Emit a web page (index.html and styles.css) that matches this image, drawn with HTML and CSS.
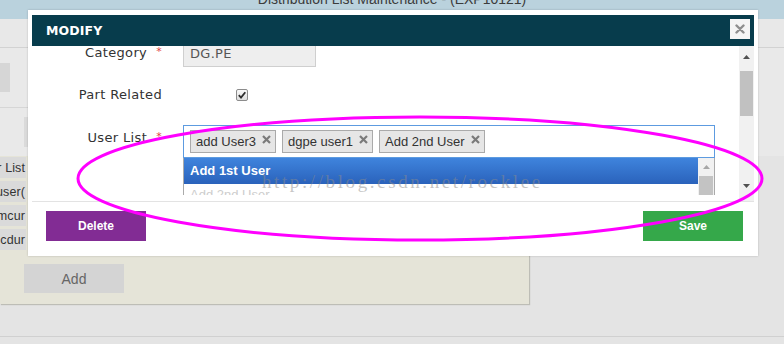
FILE: index.html
```html
<!DOCTYPE html>
<html lang="en">
<head>
<meta charset="utf-8">
<title>Distribution List Maintenance</title>
<link rel="stylesheet" href="styles.css">
</head>
<body>
<div class="page">
  <header class="topbar"><h1 class="app-title">Distribution List Maintenance - (EXP10121)</h1></header>
  <div class="toolbar"></div>
  <div class="upper">
    <div class="tool-block"></div>
    <div class="upper-sep"></div>
    <div class="filter-box"></div>
  </div>
  <section class="panel">
    <div class="grid">
      <div class="cell"><span>User List</span></div>
      <div class="cell"><span>Add user(</span></div>
      <div class="cell"><span>dgpe mcur</span></div>
      <div class="cell"><span>dgpe cdur</span></div>
    </div>
    <button class="btn-add">Add</button>
  </section>
  <div class="bottom-space"></div>
  <div class="footer-line"></div>
</div>

<div class="modal">
  <div class="modal-header">
    <span class="modal-title">MODIFY</span>
    <button class="close"><svg width="10" height="10" viewBox="0 0 10 10"><path d="M1.5 1.5L8.5 8.5M8.5 1.5L1.5 8.5" stroke="#8f8f8f" stroke-width="2.4" stroke-linecap="round"/></svg></button>
  </div>
  <div class="modal-body">
    <div class="form">
      <div class="row row-category">
        <label class="lbl">Category<span class="req">*</span></label>
        <div class="input">DG.PE</div>
      </div>
      <div class="row row-part">
        <label class="lbl">Part Related</label>
        <span class="checkbox"><svg width="12" height="12" viewBox="0 0 12 12"><defs><linearGradient id="cb" x1="0" y1="0" x2="0" y2="1"><stop offset="0" stop-color="#fafafa"/><stop offset="1" stop-color="#dcdcdc"/></linearGradient></defs><rect x="0.5" y="0.5" width="11" height="11" rx="1.5" fill="url(#cb)" stroke="#8c8c8c"/><path d="M2.8 6.2L5 8.6L9.3 3.2" fill="none" stroke="#2d2d2d" stroke-width="1.8"/></svg></span>
      </div>
      <div class="row row-users">
        <label class="lbl">User List<span class="req">*</span></label>
        <div class="multi">
          <div class="choices">
            <span class="tag">add User3<svg class="x" width="9" height="9" viewBox="0 0 9 9"><path d="M1 1L8 8M8 1L1 8" stroke="#7a7a7a" stroke-width="2.2"/></svg></span>
            <span class="tag">dgpe user1<svg class="x" width="9" height="9" viewBox="0 0 9 9"><path d="M1 1L8 8M8 1L1 8" stroke="#7a7a7a" stroke-width="2.2"/></svg></span>
            <span class="tag">Add 2nd User<svg class="x" width="9" height="9" viewBox="0 0 9 9"><path d="M1 1L8 8M8 1L1 8" stroke="#7a7a7a" stroke-width="2.2"/></svg></span>
          </div>
          <div class="drop">
            <ul class="drop-list">
              <li class="opt opt-hl">Add 1st User</li>
              <li class="opt opt-dis">Add 2nd User</li>
            </ul>
            <div class="drop-scroll">
              <span class="ds-up"><svg width="7" height="4" viewBox="0 0 7 4"><path d="M0 4L3.5 0L7 4Z" fill="#a6a6a6"/></svg></span>
              <span class="ds-thumb"></span>
            </div>
          </div>
        </div>
      </div>
    </div>
    <div class="vscroll">
      <span class="sb-up"><svg width="7" height="4" viewBox="0 0 7 4"><path d="M0 4L3.5 0L7 4Z" fill="#505050"/></svg></span>
      <span class="sb-thumb"></span>
      <span class="sb-fill"></span>
      <span class="sb-down"><svg width="7" height="4" viewBox="0 0 7 4"><path d="M0 0L3.5 4L7 0Z" fill="#505050"/></svg></span>
    </div>
  </div>
  <div class="modal-footer">
    <button class="btn btn-delete">Delete</button>
    <button class="btn btn-save">Save</button>
  </div>
</div>

<div class="watermark">http://blog.csdn.net/rocklee</div>
<svg class="annot" width="784" height="344" viewBox="0 0 784 344"><ellipse cx="420" cy="178.5" rx="342" ry="61.5" fill="none" stroke="#ff00ff" stroke-width="3"/></svg>
</body>
</html>
```

FILE: styles.css
```css
* { box-sizing: border-box; margin: 0; padding: 0; }
html, body { width: 784px; height: 344px; overflow: hidden; }
body {
  position: relative;
  background: #e4e4e4;
  font-family: "DejaVu Sans", Verdana, sans-serif;
  font-size: 13px;
  color: #333;
}

/* underlying page */
.page { display: flex; flex-direction: column; height: 344px; }
.topbar {
  height: 19px; flex: none;
  background: #bad2dd;
  display: flex; justify-content: center; align-items: flex-start;
  overflow: hidden;
}
.app-title {
  font: normal 14px/16px "Liberation Sans", Arial, sans-serif;
  color: #3c3c3c;
  margin-top: -9px;
  white-space: nowrap;
}
.toolbar { height: 29px; flex: none; background: #e8e8e8; border-bottom: 1px solid #d2d2d2; }
.upper { height: 108px; flex: none; background: #e9e9e9; padding-top: 15px; }
.tool-block { width: 10px; height: 29px; background: #d6d6d6; }
.upper-sep { margin-top: 15px; width: 28px; height: 1px; background: #d6d6d6; }
.filter-box { margin: 9px 0 0 24px; width: 6px; height: 30px; background: #dadada; }

.panel {
  width: 529px; height: 148px; flex: none;
  background: #e5e4d8;
  box-shadow: 1px 1px 1px #bdbdb6;
  padding-top: 1px;
  display: flex; flex-direction: column; align-items: flex-start;
}
.grid { display: flex; flex-direction: column; gap: 3px; width: 26px; }
.cell {
  height: 21px; background: #dadada;
  display: flex; justify-content: flex-end; align-items: center;
  overflow: hidden; white-space: nowrap;
  padding-right: 1px;
  font: 12.5px "Liberation Sans", Arial, sans-serif;
  letter-spacing: .1px;
  color: #333;
}
.btn-add {
  margin: 14px 0 0 24px;
  width: 100px; height: 29px;
  border: 0; background: #d4d4d4;
  font: 14px "Liberation Sans", Arial, sans-serif;
  color: #666;
}
.bottom-space { height: 32px; flex: none; }
.footer-line { height: 1px; flex: none; background: #d0d0d0; }

/* modal */
.modal {
  position: absolute; left: 28px; top: 10px;
  width: 730px; height: 246px;
  background: #fff;
  padding: 5px 4px 0 4px;
  display: flex; flex-direction: column;
  box-shadow: 0 0 2px rgba(0,0,0,.2);
}
.modal-header {
  height: 31px; flex: none;
  background: #073c4c;
  display: flex; align-items: center; justify-content: space-between;
  padding: 0 4px 0 14px;
}
.modal-title { font: bold 12.5px "DejaVu Sans", Verdana, sans-serif; color: #fff; letter-spacing: .1px; }
.close {
  width: 20px; height: 20px; margin-top: -3px;
  border: 0; background: #f5f5f5;
  display: flex; align-items: center; justify-content: center;
}

.modal-body { height: 155px; flex: none; display: flex; }
.form { flex: 1; overflow: hidden; }
.row { display: flex; }
.lbl {
  flex: none; width: 130px; margin-right: 21px;
  text-align: right; line-height: 20px;
  letter-spacing: .35px; color: #333;
}
.req { color: #e0453f; font-size: 11px; vertical-align: 2px; margin-left: 9px; }

.row-category { margin-top: -6px; height: 27px; align-items: flex-start; }
.row-category .lbl { padding-top: 2px; }
.input {
  width: 133px; height: 27px;
  border: 1px solid #cfcfcf; background: #eeeeee;
  padding-left: 6px; line-height: 25px;
  color: #555; letter-spacing: .3px;
}

.row-part { margin-top: 13px; height: 30px; align-items: center; }
.row-part .lbl { line-height: 30px; }
.checkbox { display: flex; margin-left: 53px; }

.row-users { margin-top: 15px; align-items: flex-start; }
.row-users .lbl { padding-top: 2px; }
.multi { width: 532px; flex: none; }
.choices {
  height: 33px;
  border: 1px solid #5d9be0;
  padding: 4px 6px;
  display: flex; gap: 6px;
}
.tag {
  height: 23px;
  border: 1px solid #aaa; background: #e6e6e6;
  padding: 0 4px 0 5px;
  display: flex; align-items: center;
  font: 13px/21px "Liberation Sans", Arial, sans-serif;
  color: #333; white-space: nowrap;
}
.tag .x { margin-left: 6px; margin-top: -5px; }

.drop {
  height: 37px;
  border: 1px solid #aaa; border-top: 0; border-bottom: 0;
  display: flex; overflow: hidden;
}
.drop-list { flex: 1; list-style: none; }
.opt { padding-left: 6px; font: 13px "Liberation Sans", Arial, sans-serif; white-space: nowrap; }
.opt-hl {
  height: 26px; line-height: 26px;
  background: linear-gradient(#3f84dd, #2a62bb);
  color: #fff; font-weight: bold;
}
.opt-dis { line-height: 22px; color: #cdcdcd; }
.drop-scroll {
  width: 16px; flex: none; background: #f1f1f1;
  display: flex; flex-direction: column; align-items: center;
}
.ds-up { height: 18px; display: flex; align-items: center; }
.ds-thumb { width: 14px; flex: 1; background: #c3c3c3; }

.vscroll {
  width: 15px; flex: none; background: #f1f1f1;
  display: flex; flex-direction: column; align-items: center;
}
.sb-up { height: 22px; display: flex; align-items: center; }
.sb-thumb { width: 13px; height: 45px; margin-top: 3px; background: #c1c1c1; }
.sb-fill { flex: 1; }
.sb-down { height: 30px; display: flex; align-items: center; }

.modal-footer {
  flex: none;
  border-top: 1px solid #e3e3e3;
  padding: 9px 11px 0 14px;
  display: flex; justify-content: space-between;
}
.btn {
  width: 100px; height: 30px;
  border: 0; color: #fff;
  font: bold 12px "Liberation Sans", Arial, sans-serif;
}
.btn-delete { background: #822c94; }
.btn-save { background: #35a84a; }

/* overlays: watermark and hand-drawn annotation */
.watermark {
  position: absolute; left: 262px; top: 172px;
  font: 19px/19px "Liberation Serif", "Times New Roman", serif;
  letter-spacing: 2.6px;
  color: rgba(140,140,140,.5);
  white-space: nowrap;
  pointer-events: none;
}
.annot { position: absolute; left: 0; top: 0; pointer-events: none; }
```
